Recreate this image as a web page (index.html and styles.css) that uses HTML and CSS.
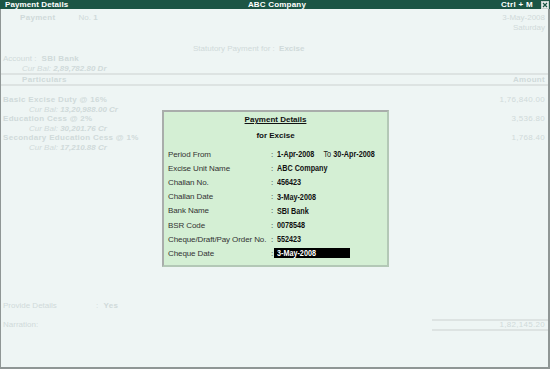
FILE: index.html
```html
<!DOCTYPE html>
<html lang="en">
<head>
    <meta charset="UTF-8">
    <title>Payment Details</title>
    <link rel="stylesheet" href="styles.css">
</head>
<body>

<div class="window">
    <div class="titlebar">
        <span class="title">Payment Details</span>
        <span class="company">ABC Company</span>
        <span class="keys">Ctrl + M
            <svg class="close" width="8" height="8" viewBox="0 0 8 8">
                <rect x="0.5" y="0.5" width="7" height="7" fill="#e8eeec" stroke="#c8d0ce"/>
                <path d="M2 2 L6 6 M6 2 L2 6" stroke="#1c5545" stroke-width="1.2"/>
            </svg>
        </span>
    </div>

    <div class="voucher">
        <div class="head-row">
            <div class="vtype"><b class="spaced">Payment</b><span class="vno">No. <b>1</b></span></div>
            <div class="date"><span>3-May-2008</span><span>Saturday</span></div>
        </div>

        <div class="stat">Statutory Payment for : <b class="stat-val">Excise</b></div>

        <div class="account">Account : <b class="spaced">SBI Bank</b></div>
        <div class="curbal first">Cur Bal: <b>2,89,782.80 Dr</b></div>

        <div class="cols">
            <b class="spaced">Particulars</b>
            <b class="spaced">Amount</b>
        </div>

        <div class="entries">
            <div class="entry"><b class="spaced">Basic Excise Duty @ 16%</b><span>1,76,840.00</span></div>
            <div class="curbal">Cur Bal: <b>13,20,988.00 Cr</b></div>
            <div class="entry"><b class="spaced">Education Cess @ 2%</b><span>3,536.80</span></div>
            <div class="curbal">Cur Bal: <b>30,201.76 Cr</b></div>
            <div class="entry"><b class="spaced">Secondary Education Cess @ 1%</b><span>1,768.40</span></div>
            <div class="curbal">Cur Bal: <b>17,210.88 Cr</b></div>
        </div>

        <div class="footer">
            <div class="provide"><span class="provide-label">Provide Details</span>: <b class="spaced">Yes</b></div>
            <div class="narration">
                <span>Narration:</span>
                <span class="total">1,82,145.20</span>
            </div>
        </div>
    </div>

    <!-- popup over the voucher -->
    <div class="dialog">
        <div class="dlg-title">Payment Details</div>
        <div class="dlg-sub">for Excise</div>
        <div class="dlg-grid">
            <span>Period From</span><span>:</span><span class="val"><span class="nar"><b>1-Apr-2008</b><span class="to">To</span><b>30-Apr-2008</b></span></span>
            <span>Excise Unit Name</span><span>:</span><span class="val"><span class="nar"><b>ABC Company</b></span></span>
            <span>Challan No.</span><span>:</span><span class="val"><span class="nar"><b>456423</b></span></span>
            <span>Challan Date</span><span>:</span><span class="val"><span class="nar"><b>3-May-2008</b></span></span>
            <span>Bank Name</span><span>:</span><span class="val"><span class="nar"><b>SBI Bank</b></span></span>
            <span>BSR Code</span><span>:</span><span class="val"><span class="nar"><b>0078548</b></span></span>
            <span>Cheque/Draft/Pay Order No.</span><span>:</span><span class="val"><span class="nar"><b>552423</b></span></span>
            <span>Cheque Date</span><span>:</span><span class="val active"><span class="nar"><b>3-May-2008</b></span></span>
        </div>
    </div>
</div>

</body>
</html>
```

FILE: styles.css
```css
*{
    margin: 0;
    padding: 0;
    box-sizing: border-box;
}

body{
    font-family: "Liberation Sans", Arial, sans-serif;
    font-size: 8px;
    background-color: #eef5f4;
}

.window{
    position: relative;
    display: flex;
    flex-direction: column;
    width: 550px;
    height: 369px;
    border-left: 1px solid #8f9695;
    border-right: 2px solid #8f9695;
    border-bottom: 2px solid #8f9695;
    background-color: #eef5f4;
}

.titlebar{
    display: flex;
    align-items: center;
    justify-content: space-between;
    height: 9px;
    margin-left: -1px;
    margin-right: -2px;
    padding: 0 1px 0 5px;
    background-color: #1c5545;
    color: #fff;
    font-weight: bold;
    line-height: 9px;
}

.title{
    width: 200px;
    letter-spacing: 0.1px;
}

.company{
    flex: 1;
    text-align: center;
    letter-spacing: 0.2px;
}

.keys{
    display: flex;
    align-items: center;
    justify-content: flex-end;
    gap: 8px;
    width: 200px;
    letter-spacing: 0.3px;
}

.close{
    display: block;
}

.voucher{
    flex: 1;
    display: flex;
    flex-direction: column;
    padding-top: 4px;
    color: #d0dada;
    line-height: 10px;
}

.spaced{
    letter-spacing: 0.3px;
}

.head-row{
    display: flex;
    justify-content: space-between;
    padding-right: 3px;
}

.vtype{
    padding-left: 19px;
}

.vno{
    margin-left: 23px;
}

.date{
    display: flex;
    flex-direction: column;
    align-items: flex-end;
}

.stat{
    margin-top: 11px;
    padding-left: 192px;
}

.stat-val{
    margin-left: 2px;
}

.account{
    padding-left: 2px;
}

.account b{
    margin-left: 3px;
}

.curbal{
    padding-left: 28px;
    font-style: italic;
    line-height: 9.5px;
}

.curbal.first{
    padding-left: 21px;
    line-height: 9px;
}

.cols{
    display: flex;
    justify-content: space-between;
    padding: 0 3px 0 21px;
    border-top: 2px solid #dde3e2;
    border-bottom: 2px solid #dde3e2;
    line-height: 9px;
}

.entries{
    padding-top: 9px;
}

.entry{
    display: flex;
    justify-content: space-between;
    padding: 0 3px 0 2px;
    line-height: 9.5px;
}

.entry span{
    letter-spacing: 0.3px;
}

.footer{
    margin-top: auto;
    padding-bottom: 36px;
}

.provide{
    padding-left: 2px;
}

.provide-label{
    display: inline-block;
    width: 93px;
}

.provide b{
    margin-left: 3px;
}

.narration{
    display: flex;
    align-items: center;
    justify-content: space-between;
    margin-top: 8px;
    padding-left: 2px;
}

.total{
    width: 116px;
    padding-right: 3px;
    text-align: right;
    border-top: 2px solid #dde3e2;
    border-bottom: 2px solid #dde3e2;
    line-height: 8px;
    letter-spacing: 0.3px;
}

.dialog{
    position: absolute;
    left: 161px;
    top: 110px;
    width: 227px;
    height: 157px;
    padding: 3px 4px 0 4px;
    background-color: #d4efd4;
    border-left: 2px solid #a9adab;
    border-top: 2px solid #a9adab;
    border-right: 2px solid #b3c8b6;
    border-bottom: 2px solid #b3c8b6;
    color: #333;
}

.dlg-title,
.dlg-sub{
    text-align: center;
    font-weight: bold;
    color: #111;
    line-height: 10px;
}

.dlg-title{
    text-decoration: underline;
}

.dlg-sub{
    margin-top: 6px;
}

.dlg-grid{
    display: grid;
    grid-template-columns: 103px 3px 1fr;
    grid-auto-rows: 14.2px;
    align-items: center;
    margin-top: 6px;
    letter-spacing: -0.1px;
}

.val{
    display: flex;
    align-items: center;
    height: 10px;
    padding-left: 3px;
    white-space: nowrap;
}

/* narrow bold face of the original */
.nar{
    display: inline-block;
    font-size: 9.5px;
    line-height: 10px;
    letter-spacing: 0;
    color: #111;
    transform: scaleX(0.76);
    transform-origin: left center;
}

.to{
    margin: 0 3px 0 12px;
    color: #222;
}

.val.active{
    width: 76px;
    background-color: #000;
}

.val.active .nar{
    color: #fff;
}
```
